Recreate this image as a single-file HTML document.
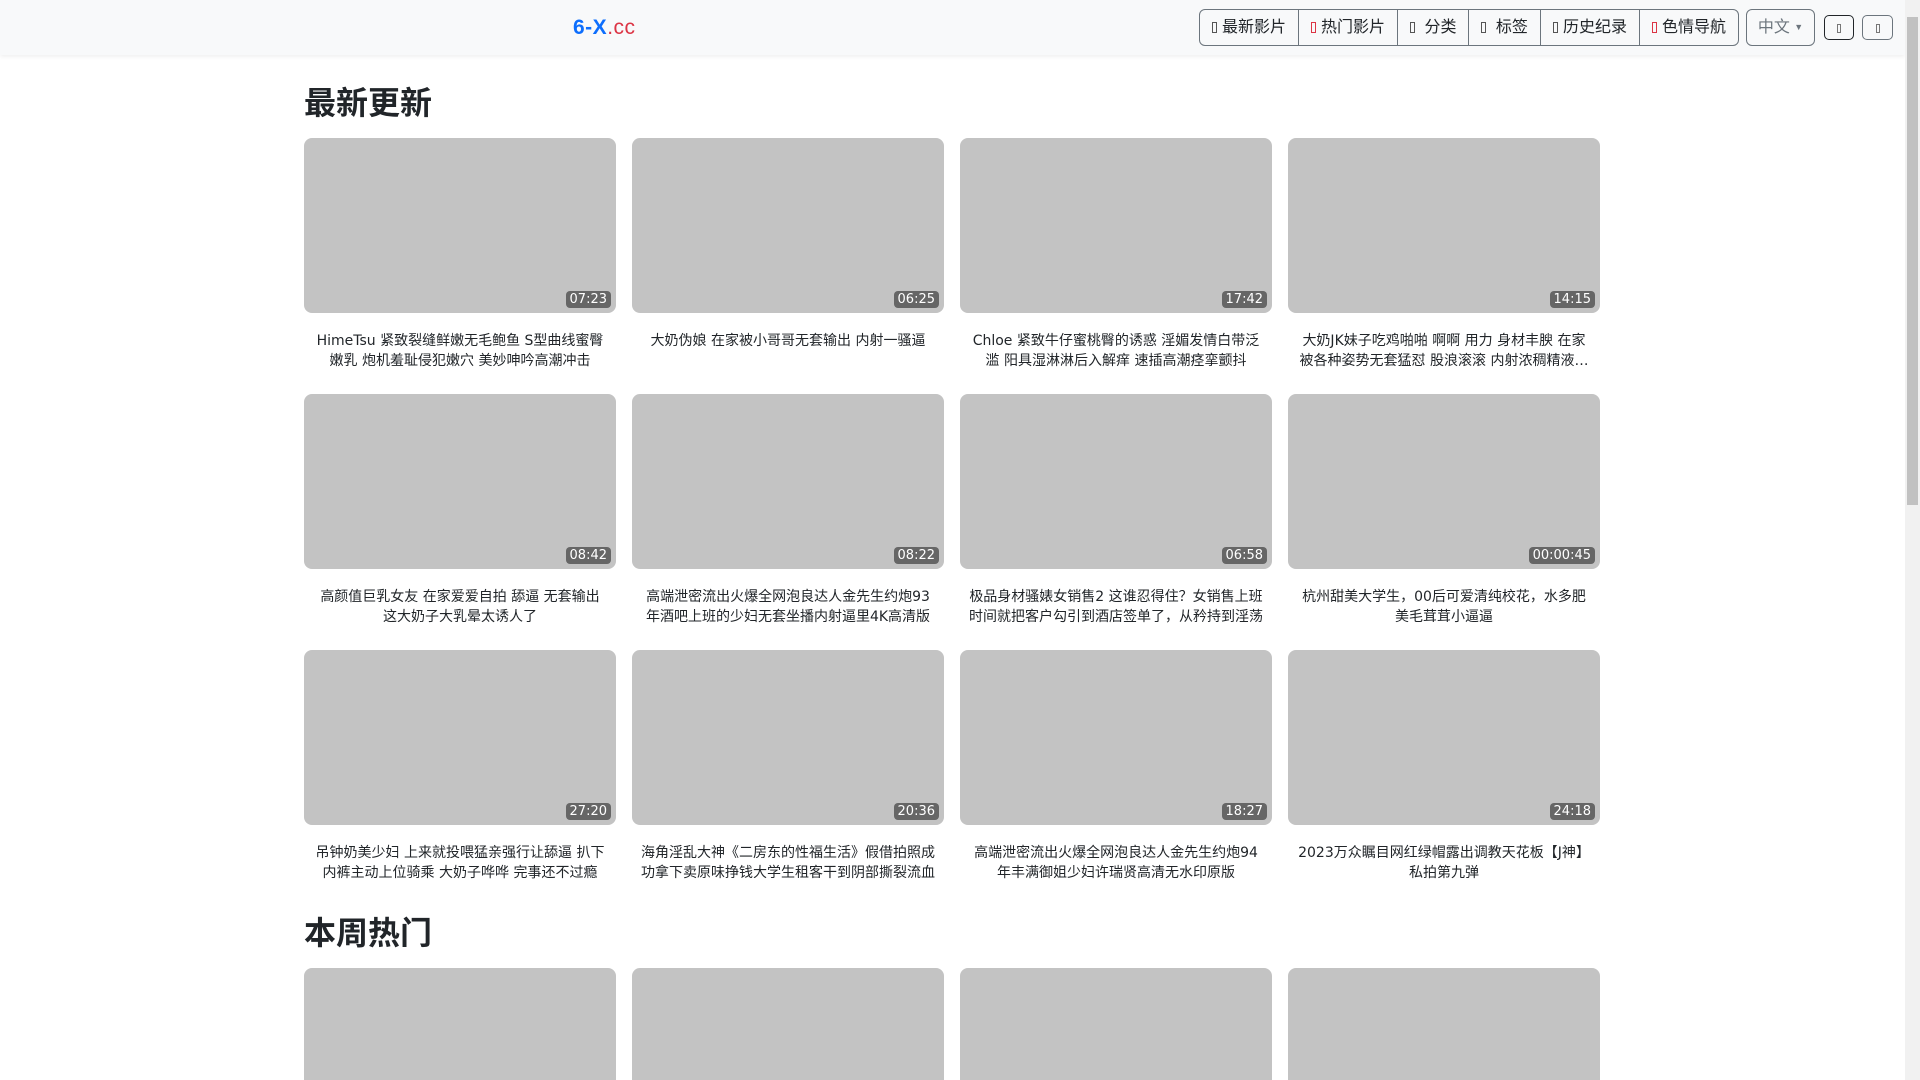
<!DOCTYPE html>
<html><head><meta charset="utf-8">
<style>
*{box-sizing:border-box;margin:0;padding:0}
html,body{width:1920px;height:1080px;overflow:hidden;background:#fff}
body{font-family:"Liberation Sans","Noto Sans CJK SC",sans-serif;color:#212529;position:relative}
.nav{position:absolute;left:0;top:0;width:1905px;height:55px;background:#f8f9fa;box-shadow:0 2px 4px rgba(0,0,0,.06)}
.logo{position:absolute;left:573px;top:14px;font-size:21px;font-weight:bold;color:#0d6efd;line-height:28px;letter-spacing:0.5px}
.logo span{color:#dc3545;font-weight:normal}
.grp{position:absolute;left:1199px;top:9px;height:37px;display:flex;border:1px solid #6c757d;border-radius:6px;overflow:hidden}
.grp div{height:35px;line-height:35px;font-size:16px;padding:0 12px;border-left:1px solid #6c757d;color:#212529;white-space:nowrap}
.grp div:first-child{border-left:none}
.ic{display:inline-block;width:5px;height:11px;border:1px solid #555;margin-right:5px;vertical-align:-1px}
.ic.r{border-color:#dc3545}
.lang{position:absolute;left:1746px;top:9px;width:69px;height:37px;border:1px solid #6c757d;border-radius:6px;color:#6c757d;font-size:16px;line-height:35px;text-align:center}
.sb{position:absolute;top:15px;height:25px;border-radius:5px}
.sb i{position:absolute;left:50%;top:8px;width:4px;height:9px;border:1px solid #777;margin-left:-2px}
.scroll{position:absolute;left:1905px;top:0;width:15px;height:1080px;background:#f1f1f1}
.scroll .t{position:absolute;left:2px;top:17px;width:11px;height:488px;background:#c1c1c1}
h2{position:absolute;left:304px;font-size:32px;font-weight:bold;line-height:40px}
.card{position:absolute;width:312px}
.th{width:312px;height:175px;background:#c3c3c3;border-radius:8px;position:relative}
.d{position:absolute;right:5px;bottom:5px;background:#666;color:#fff;font-family:"DejaVu Sans",sans-serif;font-size:13px;line-height:17px;padding:0 4px;border-radius:4px}
.tt{margin-top:18px;font-family:"DejaVu Sans","Noto Sans CJK SC",sans-serif;font-size:14px;line-height:20px;text-align:center;padding:0 9px;height:40px;overflow:hidden;display:-webkit-box;-webkit-line-clamp:2;-webkit-box-orient:vertical;color:#212529}
</style></head><body>
<div class="nav">
<div class="logo">6-X<span>.cc</span></div>
<div class="grp">
<div><i class="ic"></i>最新影片</div>
<div><i class="ic r"></i>热门影片</div>
<div><i class="ic"></i> 分类</div>
<div><i class="ic"></i> 标签</div>
<div><i class="ic"></i>历史纪录</div>
<div><i class="ic r"></i>色情导航</div>
</div>
<div class="lang">中文 <span style="font-size:9px;vertical-align:2px">▼</span></div>
<div class="sb" style="left:1824px;width:30px;border:1px solid #212529"><i></i></div>
<div class="sb" style="left:1862px;width:31px;border:1px solid #6c757d"><i></i></div>
</div>
<div class="scroll"><div class="t"></div></div>

<h2 style="top:83px">最新更新</h2>
<h2 style="top:913px">本周热门</h2>

<div class="card" style="left:304px;top:138px"><div class="th"><span class="d">07:23</span></div><div class="tt">HimeTsu 紧致裂缝鲜嫩无毛鲍鱼 S型曲线蜜臀嫩乳 炮机羞耻侵犯嫩穴 美妙呻吟高潮冲击</div></div>
<div class="card" style="left:632px;top:138px"><div class="th"><span class="d">06:25</span></div><div class="tt">大奶伪娘 在家被小哥哥无套输出 内射一骚逼</div></div>
<div class="card" style="left:960px;top:138px"><div class="th"><span class="d">17:42</span></div><div class="tt">Chloe 紧致牛仔蜜桃臀的诱惑 淫媚发情白带泛滥 阳具湿淋淋后入解痒 速插高潮痉挛颤抖</div></div>
<div class="card" style="left:1288px;top:138px"><div class="th"><span class="d">14:15</span></div><div class="tt">大奶JK妹子吃鸡啪啪 啊啊 用力 身材丰腴 在家被各种姿势无套猛怼 股浪滚滚 内射浓稠精液流出</div></div>

<div class="card" style="left:304px;top:394px"><div class="th"><span class="d">08:42</span></div><div class="tt">高颜值巨乳女友 在家爱爱自拍 舔逼 无套输出 这大奶子大乳晕太诱人了</div></div>
<div class="card" style="left:632px;top:394px"><div class="th"><span class="d">08:22</span></div><div class="tt">高端泄密流出火爆全网泡良达人金先生约炮93年酒吧上班的少妇无套坐播内射逼里4K高清版</div></div>
<div class="card" style="left:960px;top:394px"><div class="th"><span class="d">06:58</span></div><div class="tt">极品身材骚婊女销售2 这谁忍得住？女销售上班时间就把客户勾引到酒店签单了，从矜持到淫荡</div></div>
<div class="card" style="left:1288px;top:394px"><div class="th"><span class="d">00:00:45</span></div><div class="tt">杭州甜美大学生，00后可爱清纯校花，水多肥美毛茸茸小逼逼</div></div>

<div class="card" style="left:304px;top:650px"><div class="th"><span class="d">27:20</span></div><div class="tt">吊钟奶美少妇 上来就投喂猛亲强行让舔逼 扒下内裤主动上位骑乘 大奶子哗哗 完事还不过瘾</div></div>
<div class="card" style="left:632px;top:650px"><div class="th"><span class="d">20:36</span></div><div class="tt">海角淫乱大神《二房东的性福生活》假借拍照成功拿下卖原味挣钱大学生租客干到阴部撕裂流血</div></div>
<div class="card" style="left:960px;top:650px"><div class="th"><span class="d">18:27</span></div><div class="tt">高端泄密流出火爆全网泡良达人金先生约炮94年丰满御姐少妇许瑞贤高清无水印原版</div></div>
<div class="card" style="left:1288px;top:650px"><div class="th"><span class="d">24:18</span></div><div class="tt">2023万众瞩目网红绿帽露出调教天花板【J神】私拍第九弹</div></div>

<div class="card" style="left:304px;top:968px"><div class="th"></div></div>
<div class="card" style="left:632px;top:968px"><div class="th"></div></div>
<div class="card" style="left:960px;top:968px"><div class="th"></div></div>
<div class="card" style="left:1288px;top:968px"><div class="th"></div></div>
</body></html>
